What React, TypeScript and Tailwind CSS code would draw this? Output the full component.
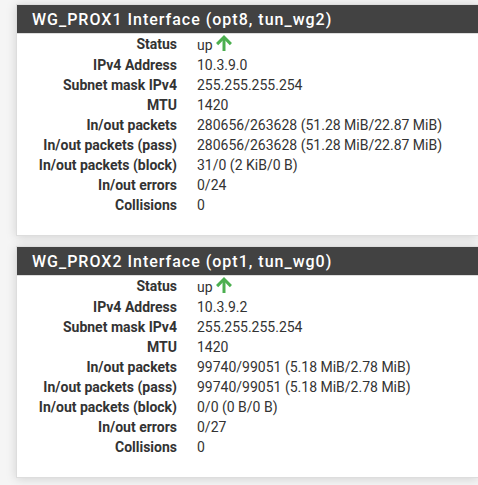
import React from 'react';

interface InterfaceStatus {
  title: string;
  rows: [string, string][];
}

const interfaces: InterfaceStatus[] = [
  {
    title: 'WG_PROX1 Interface (opt8, tun_wg2)',
    rows: [
      ['IPv4 Address', '10.3.9.0'],
      ['Subnet mask IPv4', '255.255.255.254'],
      ['MTU', '1420'],
      ['In/out packets', '280656/263628 (51.28 MiB/22.87 MiB)'],
      ['In/out packets (pass)', '280656/263628 (51.28 MiB/22.87 MiB)'],
      ['In/out packets (block)', '31/0 (2 KiB/0 B)'],
      ['In/out errors', '0/24'],
      ['Collisions', '0'],
    ],
  },
  {
    title: 'WG_PROX2 Interface (opt1, tun_wg0)',
    rows: [
      ['IPv4 Address', '10.3.9.2'],
      ['Subnet mask IPv4', '255.255.255.254'],
      ['MTU', '1420'],
      ['In/out packets', '99740/99051 (5.18 MiB/2.78 MiB)'],
      ['In/out packets (pass)', '99740/99051 (5.18 MiB/2.78 MiB)'],
      ['In/out packets (block)', '0/0 (0 B/0 B)'],
      ['In/out errors', '0/27'],
      ['Collisions', '0'],
    ],
  },
];

const ArrowUp: React.FC = () => (
  <svg viewBox="0 0 16 16" className="w-4 h-4 mb-1" fill="none" stroke="#4caf50" strokeWidth="3" aria-hidden="true">
    <path d="M8 16V2.5" />
    <path d="M1.1 9.1L8 2.2l6.9 6.9" />
  </svg>
);

const Panel: React.FC<{ item: InterfaceStatus }> = ({ item }) => (
  <section className="bg-white border border-r-0 border-[#dddddd] shadow-[0_1px_10px_rgba(0,0,0,0.15)]">
    <h2 className="h-[29px] px-[15px] bg-[#424242] border-b border-[#dddddd] text-white text-base leading-[29px] font-medium tracking-[1px] whitespace-nowrap">
      {item.title}
    </h2>
    <dl className="grid grid-cols-[160px_1fr] gap-x-5 pb-5 leading-5 whitespace-nowrap">
      <dt className="text-right font-bold">Status</dt>
      <dd className="h-[21px] flex items-end gap-[3px]">
        <span className="leading-5">up</span>
        <ArrowUp />
      </dd>
      {item.rows.map(([label, value]) => (
        <React.Fragment key={label}>
          <dt className="text-right font-bold">{label}</dt>
          <dd>{value}</dd>
        </React.Fragment>
      ))}
    </dl>
  </section>
);

const App: React.FC = () => {
  return (
    <main className="min-h-screen overflow-hidden bg-[#f5f5f5] pt-1 pl-4 pb-2 flex flex-col gap-[10px] font-[Roboto,sans-serif] text-sm text-[#333333]">
      {interfaces.map((item) => (
        <Panel key={item.title} item={item} />
      ))}
    </main>
  );
};

export default App;
